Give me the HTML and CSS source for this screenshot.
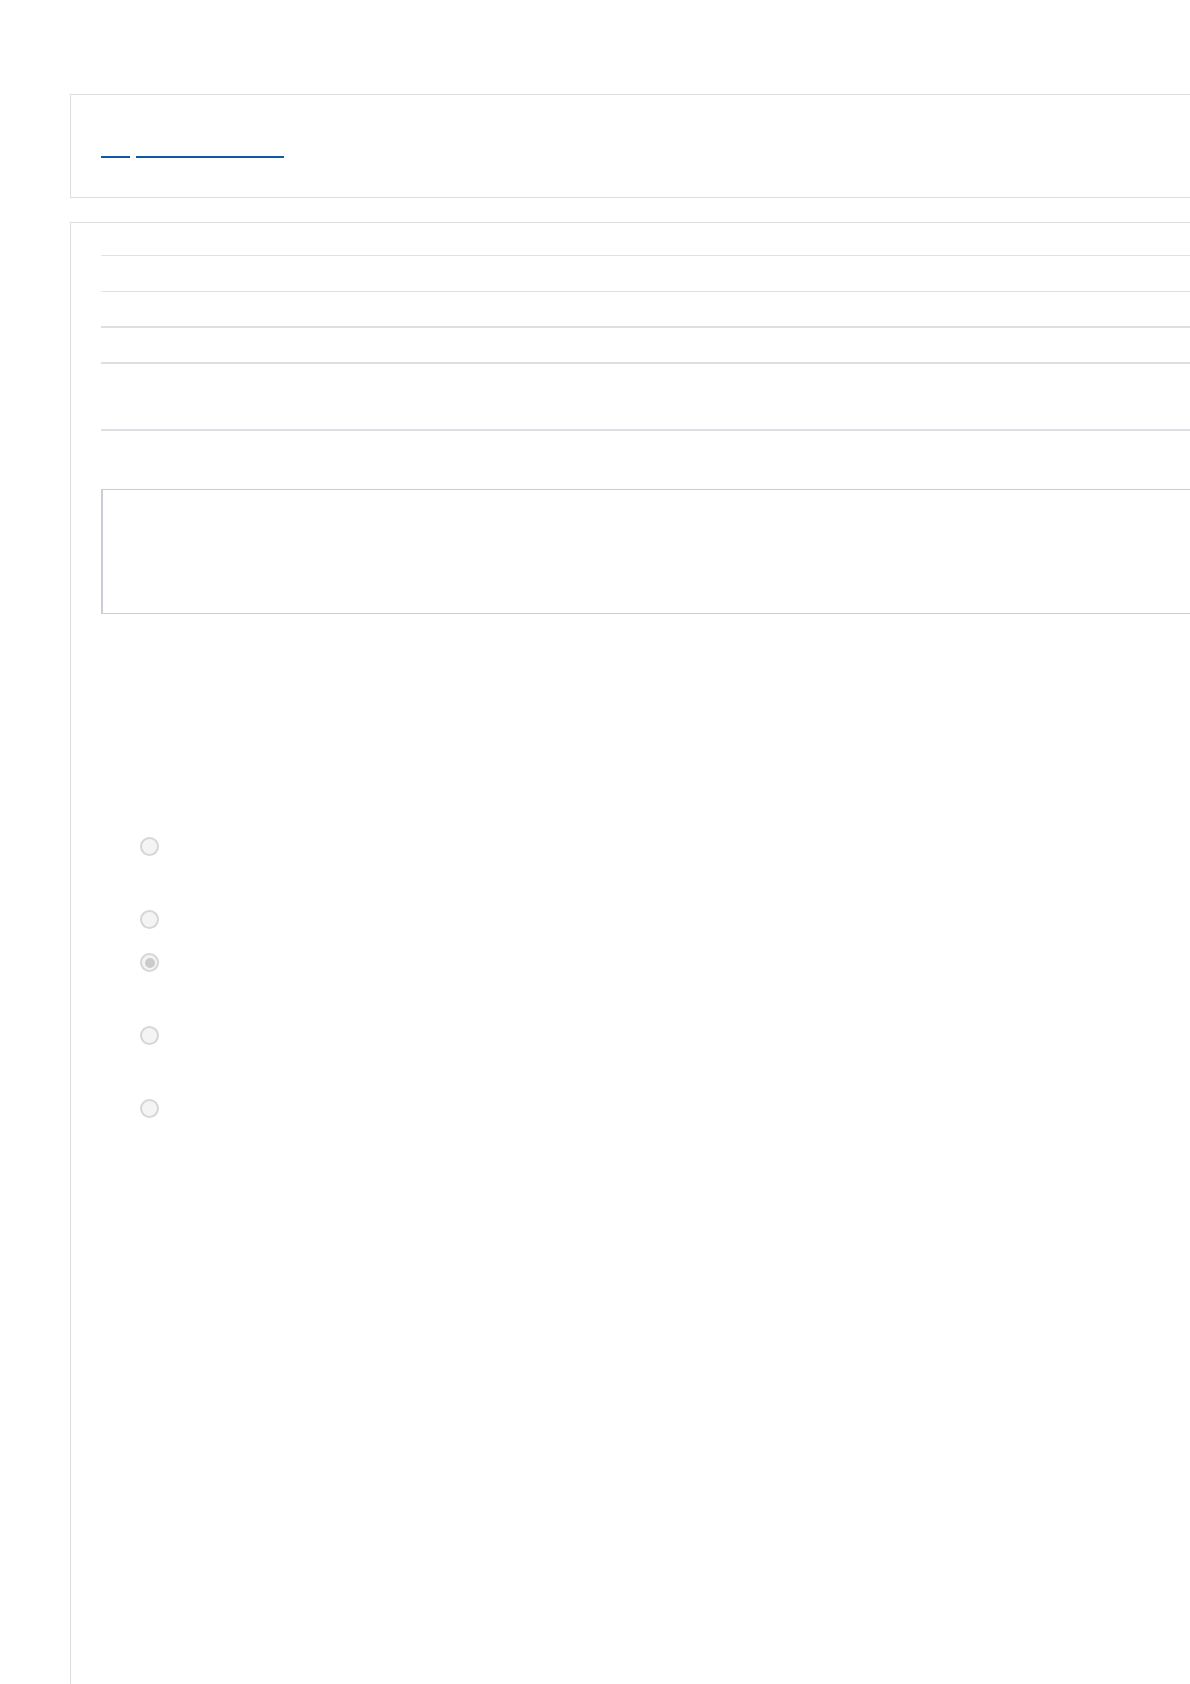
FILE: index.html
```html
<!DOCTYPE html>
<html lang="en">
<head>
    <meta charset="UTF-8">
    <meta name="viewport" content="width=device-width, initial-scale=1.0">
    <title>Form</title>
    <link rel="stylesheet" href="styles.css">
</head>
<body>
    <div id="page">
        <div class="card header">
            <div class="crumbs">
                <a href="#" class="crumb crumb-short"></a>
                <a href="#" class="crumb crumb-long"></a>
            </div>
        </div>
        <div class="card main">
            <div class="row"></div>
            <div class="row"></div>
            <div class="row thick"></div>
            <div class="row thick tall"></div>
            <div class="notice"></div>
            <div class="options">
                <label class="option two-line"><span class="radio"></span></label>
                <label class="option"><span class="radio"></span></label>
                <label class="option two-line"><span class="radio checked"></span></label>
                <label class="option two-line"><span class="radio"></span></label>
                <label class="option"><span class="radio"></span></label>
            </div>
        </div>
    </div>
</body>
</html>
```

FILE: styles.css
```css
html, body {
    overflow-x: hidden;
}

body {
    margin: 0;
    font-family: "Liberation Sans", Arial, sans-serif;
    background-color: #ffffff;
}

#page {
    padding: 94px 0 0 70px;
}

.card {
    width: 1160px;
    border: 1px solid #dedede;
    background-color: #ffffff;
    box-sizing: border-box;
}

.header {
    height: 104px;
    padding: 44px 30px 0;
}

.crumbs {
    display: flex;
    gap: 6px;
}

.crumb {
    display: block;
    height: 17px;
    border-bottom: 2px solid #0e5aa5;
}

.crumb-short {
    width: 29px;
}

.crumb-long {
    width: 148px;
}

.main {
    margin-top: 24px;
    min-height: 1500px;
    border-bottom: none;
    padding: 32px 0 0 30px;
}

.row {
    height: 35px;
    border-top: 1px solid #e1e1e1;
}

.row:nth-child(2) {
    height: 34px;
}

.row.thick {
    height: 34px;
    border-top: 2px solid #dcdfe3;
}

.row.tall {
    height: 65px;
    border-bottom: 2px solid #dcdfe3;
}

.notice {
    margin-top: 58px;
    height: 125px;
    box-sizing: border-box;
    border: 1px solid #c9ced6;
    border-left-width: 2px;
}

.options {
    padding: 223px 0 0 39px;
}

.option {
    display: block;
    height: 43px;
}

.option.two-line {
    height: 73px;
}

.radio {
    display: block;
    width: 19px;
    height: 19px;
    box-sizing: border-box;
    border: 2px solid #d6d6d6;
    border-radius: 50%;
    background-color: #f4f4f4;
    position: relative;
}

.radio.checked::after {
    content: "";
    position: absolute;
    left: 2.5px;
    top: 2.5px;
    width: 10px;
    height: 10px;
    border-radius: 50%;
    background-color: #cbcbcb;
}
```
